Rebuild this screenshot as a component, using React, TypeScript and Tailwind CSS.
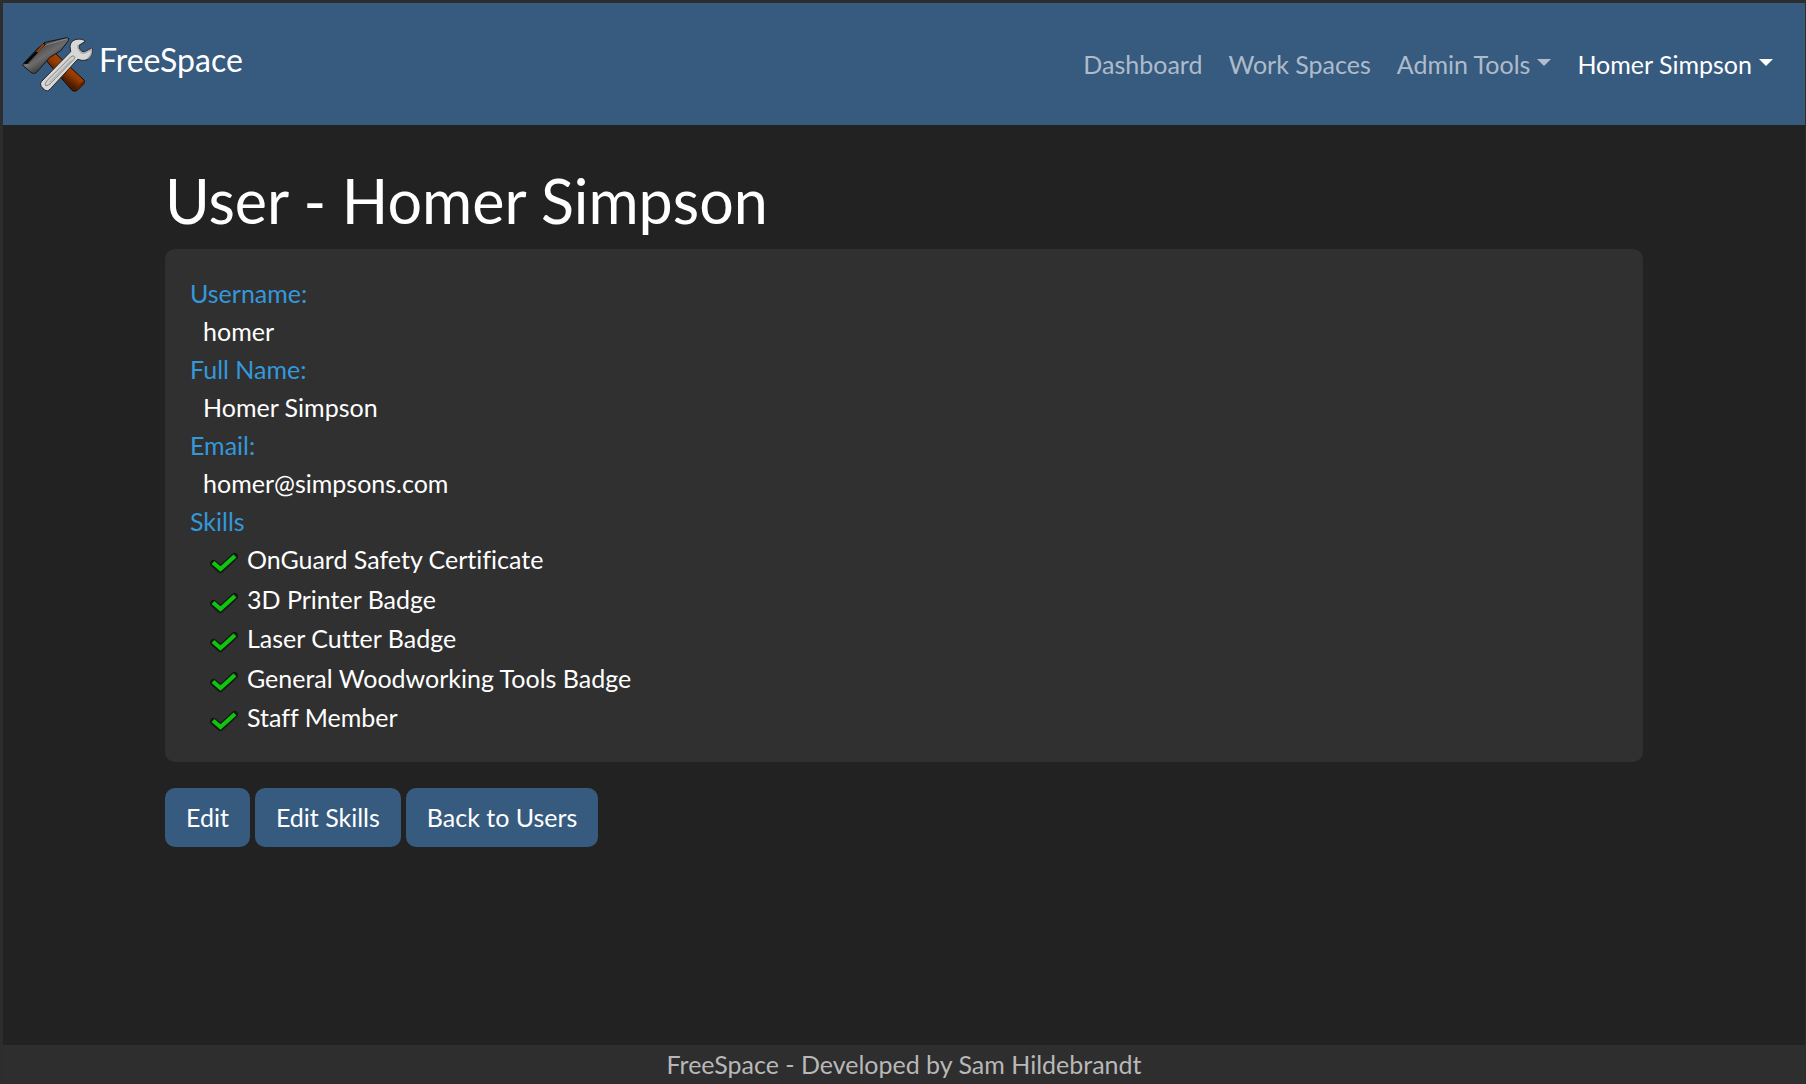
import React from "react";

const skills = [
  "OnGuard Safety Certificate",
  "3D Printer Badge",
  "Laser Cutter Badge",
  "General Woodworking Tools Badge",
  "Staff Member",
];

const details = [
  { label: "Username:", value: "homer" },
  { label: "Full Name:", value: "Homer Simpson" },
  { label: "Email:", value: "homer@simpsons.com" },
];

function ToolsLogo() {
  return (
    <svg viewBox="30 27 222 174" className="h-[58px] w-[74px]" aria-hidden="true">
      <defs>
        <linearGradient id="head" x1="90" y1="60" x2="125" y2="115" gradientUnits="userSpaceOnUse">
          <stop offset="0" stopColor="#4a4a4a" />
          <stop offset="0.5" stopColor="#6c6c6c" />
          <stop offset="1" stopColor="#3a3a3a" />
        </linearGradient>
        <linearGradient id="face" x1="45" y1="110" x2="70" y2="140" gradientUnits="userSpaceOnUse">
          <stop offset="0" stopColor="#8a8a8a" />
          <stop offset="1" stopColor="#444444" />
        </linearGradient>
        <linearGradient id="wood" x1="190" y1="120" x2="160" y2="160" gradientUnits="userSpaceOnUse">
          <stop offset="0" stopColor="#a94300" />
          <stop offset="0.5" stopColor="#933a00" />
          <stop offset="1" stopColor="#4a1c00" />
        </linearGradient>
      </defs>
      <path d="M108 103 133 79 222 162Q227 168 220 175L203 192Q194 199 186 193Z" fill="url(#wood)" stroke="#170900" strokeWidth="3" />
      <path d="M200 195Q206 170 223 164 226 170 220 176L204 192Z" fill="#5c2300" />
      <path d="M38 116 80 70 105 49 171 35Q179 37 176 43L152 74 118 95 80 139Q75 145 66 141L40 120Z" fill="url(#head)" stroke="#151515" strokeWidth="3" strokeLinejoin="round" />
      <path d="M40 112 104 50 108 58 53 116Z" fill="#050505" />
      <path d="M78 78 99 54 105 56 84 79Z" fill="#a64608" />
      <path d="M42 117 54 113 79 135Q74 143 66 139Z" fill="url(#face)" />
      <path d="M54 113 108 57 172 38" fill="none" stroke="#9b9b9b" strokeWidth="2" />
      <path d="M182 77 180 61Q181 46 196 41 216 36 226 46L207 58Q204 66 214 75 220 80 227 76L246 66Q249 82 242 91 233 105 215 103L203 100 120 190Q114 198 105 193L94 182Q88 173 95 166Z" fill="#d8d8d8" stroke="#242424" strokeWidth="3" strokeLinejoin="round" />
      <path d="M204 57Q201 68 211 77 219 85 227 80L244 70Q246 88 233 97" fill="none" stroke="#aaaaaa" strokeWidth="4" />
      <path d="M182 93Q190 85 195 94L191 101 120 174Q109 182 106 178 104 173 111 164Z" fill="#d0d0d0" stroke="#858585" strokeWidth="3" />
      <path d="M184 103 119 168" stroke="#a2a2a2" strokeWidth="3" />
    </svg>
  );
}

function Check() {
  return (
    <svg viewBox="0 0 28 22" className="mt-2 h-[22px] w-7 shrink-0" fill="none" aria-hidden="true">
      <path d="M3.500 11.500 10.500 17.500 24.500 4.500" stroke="#101810" strokeWidth="7" strokeLinejoin="round" strokeLinecap="round" />
      <path d="M3 10.500 10.500 17 25 4" stroke="#10c410" strokeWidth="4.200" />
    </svg>
  );
}

function Caret() {
  return (
    <svg viewBox="0 0 14 7" className="mb-[3px] ml-[7px] h-[7px] w-3.5" fill="currentColor" aria-hidden="true">
      <path d="M0 0H14L7 7Z" />
    </svg>
  );
}

const button = "rounded-[10px] bg-[#375a7f] px-[21px] py-[10px] leading-[39px]";

export default function App() {
  return (
    <div className="flex min-h-screen flex-col border-t-[3px] border-r border-l-[3px] border-[#2d2d30] bg-[#222222] font-['Lato',sans-serif] text-[25px] leading-[38px] text-white [font-variant-ligatures:none]">
      <header className="flex items-center justify-between bg-[#375a7f] py-8 pr-5 pl-[17px]">
        <a href="#home" className="flex items-center text-[32px] leading-[48px]">
          <ToolsLogo />
          <span className="-mt-2 ml-[5px]">FreeSpace</span>
        </a>
        <nav className="mr-3 flex items-center gap-[26px] text-white/60">
          <a href="#dashboard">Dashboard</a>
          <a href="#spaces">Work Spaces</a>
          <button type="button" className="flex items-center">
            Admin Tools
            <Caret />
          </button>
          <button type="button" className="flex items-center text-white">
            Homer Simpson
            <Caret />
          </button>
        </nav>
      </header>

      <main className="mx-auto w-full max-w-[1478px] grow pt-[38px]">
        <h1 className="mb-[10px] text-[61px] leading-[76px]">User - Homer Simpson</h1>
        <section className="rounded-[10px] bg-[#303030] px-[25px] pt-[25px] pb-[26px]">
          <dl>
            {details.map((d) => (
              <div key={d.label}>
                <dt className="text-[#3498db]">{d.label}</dt>
                <dd className="ml-[13px]">{d.value}</dd>
              </div>
            ))}
          </dl>
          <h2 className="text-[#3498db]">Skills</h2>
          <ul className="flex min-h-49 flex-col justify-between pl-5">
            {skills.map((s) => (
              <li key={s} className="flex items-center gap-[9px]">
                <Check />
                {s}
              </li>
            ))}
          </ul>
        </section>
        <div className="mt-[26px] flex gap-[5px]">
          <button type="button" className={button}>Edit</button>
          <button type="button" className={button}>Edit Skills</button>
          <button type="button" className={button}>Back to Users</button>
        </div>
      </main>

      <footer className="bg-[#2e2e2e] text-center leading-[39px] text-[#b8b8b8]">
        FreeSpace - Developed by Sam Hildebrandt
      </footer>
    </div>
  );
}
